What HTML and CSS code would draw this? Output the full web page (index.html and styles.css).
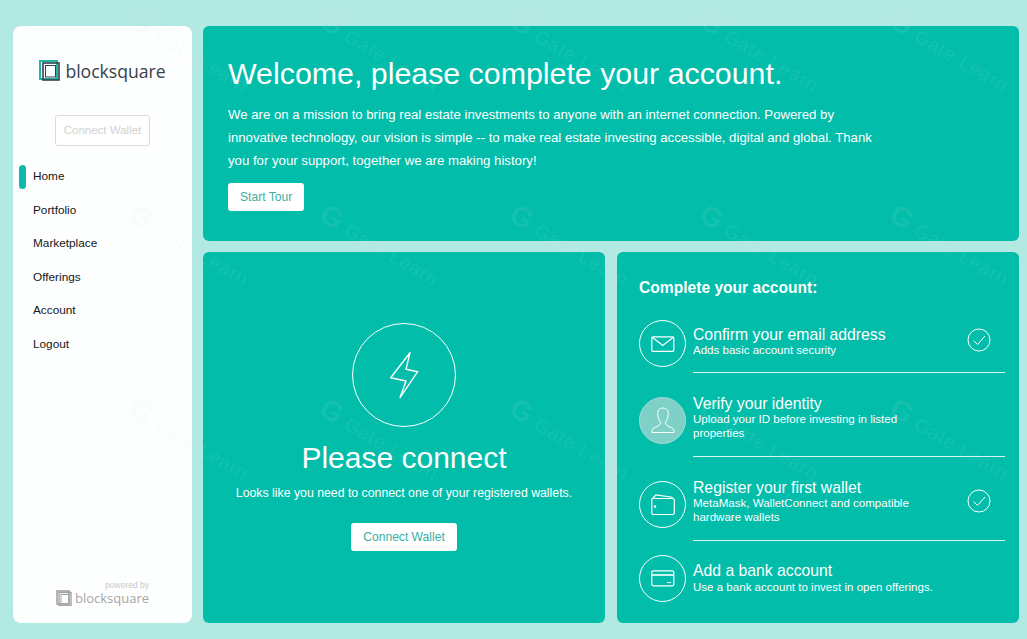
FILE: index.html
```html
<!DOCTYPE html>
<html lang="en">
<head>
    <meta charset="UTF-8">
    <title>Blocksquare Dashboard</title>
    <link rel="stylesheet" href="styles.css">
</head>
<body>
    <div class="app">
        <aside class="sidebar">
            <div class="logo">
                <svg class="logo-mark" width="22" height="22" viewBox="0 0 22 22" fill="none">
                    <rect x="1" y="1" width="17" height="18" stroke="#1fb5a6" stroke-width="2"/>
                    <rect x="4" y="3" width="16" height="17" stroke="#33404a" stroke-width="1.6"/>
                    <rect x="6.5" y="5.5" width="10" height="11.5" stroke="#33404a" stroke-width="1"/>
                </svg>
                <span>blocksquare</span>
            </div>
            <button class="btn-ghost">Connect Wallet</button>
            <nav class="nav">
                <a class="nav-item active">Home</a>
                <a class="nav-item">Portfolio</a>
                <a class="nav-item">Marketplace</a>
                <a class="nav-item">Offerings</a>
                <a class="nav-item">Account</a>
                <a class="nav-item">Logout</a>
            </nav>
            <div class="powered">
                <small>powered by</small>
                <div class="powered-row">
                    <svg width="16" height="16" viewBox="0 0 16 16" fill="none" stroke="#a3a3a3">
                        <rect x="1" y="1" width="12" height="13" stroke-width="1.6"/>
                        <rect x="3" y="2.5" width="12" height="13" stroke-width="1.4"/>
                        <rect x="5" y="4.5" width="8" height="9" stroke-width="1"/>
                    </svg>
                    <span>blocksquare</span>
                </div>
            </div>
        </aside>

        <main class="main">
            <section class="card hero">
                <h1>Welcome, please complete your account.</h1>
                <p>We are on a mission to bring real estate investments to anyone with an internet connection. Powered by innovative technology, our vision is simple -- to make real estate investing accessible, digital and global. Thank you for your support, together we are making history!</p>
                <button class="btn">Start Tour</button>
            </section>

            <div class="bottom">
                <section class="card connect">
                    <div class="connect-circle">
                        <svg width="30" height="48" viewBox="0 0 30 48" fill="none" stroke="#fff" stroke-width="1.4" stroke-linejoin="round">
                            <path d="M21 1.700 L1.700 26.700 L17 30 L11 46.700 L28.700 20.700 L17 18.300 Z"/>
                        </svg>
                    </div>
                    <h2>Please connect</h2>
                    <p>Looks like you need to connect one of your registered wallets.</p>
                    <button class="btn">Connect Wallet</button>
                </section>

                <section class="card steps">
                    <h3>Complete your account:</h3>

                    <div class="step step-one">
                        <div class="step-icon">
                            <svg width="24" height="16" viewBox="0 0 24 16" fill="none" stroke="#fff" stroke-width="1.200">
                                <rect x="0.800" y="0.800" width="22" height="14.500" rx="1"/>
                                <path d="M1.500 1.500 L11.800 9.500 L22 1.500"/>
                            </svg>
                        </div>
                        <div class="step-text">
                            <h4>Confirm your email address</h4>
                            <p>Adds basic account security</p>
                        </div>
                        <svg class="step-check" width="24" height="24" viewBox="0 0 24 24" fill="none" stroke="#fff" stroke-width="1">
                            <circle cx="12" cy="12" r="11"/>
                            <path d="M6.500 12.500 L10.500 16.500 L18 8"/>
                        </svg>
                    </div>
                    <hr class="step-line">

                    <div class="step step-two">
                        <div class="step-icon filled">
                            <svg width="24" height="28" viewBox="0 0 24 28" fill="none" stroke="#fff" stroke-width="1">
                                <path d="M12 1 C7.500 1 6.500 4.500 6.800 8 C7 11 8 13 9.300 14.500 C9.800 16.500 9 18 7 19 C4 20.500 1.500 21 1 23.500 L1 25.500 L23 25.500 L23 23.500 C22.500 21 20 20.500 17 19 C15 18 14.200 16.500 14.700 14.500 C16 13 17 11 17.200 8 C17.500 4.500 16.500 1 12 1 Z"/>
                            </svg>
                        </div>
                        <div class="step-text">
                            <h4>Verify your identity</h4>
                            <p>Upload your ID before investing in listed<br>properties</p>
                        </div>
                    </div>
                    <hr class="step-line">

                    <div class="step step-three">
                        <div class="step-icon">
                            <svg width="24" height="22" viewBox="0 0 24 22" fill="none" stroke="#fff" stroke-width="1.200">
                                <rect x="0.800" y="4.500" width="22.500" height="16" rx="1.500"/>
                                <path d="M1 5 L5 1 L21 3.200 L21 4.500"/>
                                <circle cx="4" cy="12.500" r="0.700" fill="#fff"/>
                            </svg>
                        </div>
                        <div class="step-text">
                            <h4>Register your first wallet</h4>
                            <p>MetaMask, WalletConnect and compatible<br>hardware wallets</p>
                        </div>
                        <svg class="step-check" width="24" height="24" viewBox="0 0 24 24" fill="none" stroke="#fff" stroke-width="1">
                            <circle cx="12" cy="12" r="11"/>
                            <path d="M6.500 12.500 L10.500 16.500 L18 8"/>
                        </svg>
                    </div>
                    <hr class="step-line">

                    <div class="step step-four">
                        <div class="step-icon">
                            <svg width="24" height="17" viewBox="0 0 24 17" fill="none" stroke="#fff" stroke-width="1.200">
                                <rect x="0.800" y="0.800" width="22" height="15" rx="1.500"/>
                                <path d="M1 5 H22.500" stroke-width="1.600"/>
                                <path d="M16 12.500 H20"/>
                            </svg>
                        </div>
                        <div class="step-text">
                            <h4>Add a bank account</h4>
                            <p>Use a bank account to invest in open offerings.</p>
                        </div>
                    </div>
                </section>
            </div>
        </main>
    </div>

    <!-- faint repeated watermark over the screenshot -->
    <div class="watermark" aria-hidden="true">
        <span><b>G</b> Gate Learn</span><span><b>G</b> Gate Learn</span><span><b>G</b> Gate Learn</span><span><b>G</b> Gate Learn</span><span><b>G</b> Gate Learn</span>
        <span><b>G</b> Gate Learn</span><span><b>G</b> Gate Learn</span><span><b>G</b> Gate Learn</span><span><b>G</b> Gate Learn</span><span><b>G</b> Gate Learn</span>
        <span><b>G</b> Gate Learn</span><span><b>G</b> Gate Learn</span><span><b>G</b> Gate Learn</span><span><b>G</b> Gate Learn</span><span><b>G</b> Gate Learn</span>
    </div>
</body>
</html>
```

FILE: styles.css
```css
* {
    margin: 0;
    padding: 0;
    box-sizing: border-box;
}

body {
    font-family: "Liberation Sans", Arial, sans-serif;
    background: #b2e9e2;
    width: 1027px;
    height: 639px;
    overflow: hidden;
    position: relative;
}

.app {
    display: flex;
    gap: 11px;
    padding: 26px 8px 16px 13px;
    height: 639px;
}

.sidebar {
    width: 179px;
    background: #fdfefe;
    border-radius: 8px;
    display: flex;
    flex-direction: column;
    align-items: center;
}

.logo {
    display: flex;
    align-items: center;
    gap: 4px;
    margin-top: 33px;
    color: #37424a;
    font-family: "Open Sans", sans-serif;
    font-size: 17.600px;
    line-height: 24px;
}

.btn-ghost {
    margin-top: 32px;
    width: 95px;
    height: 31px;
    padding-bottom: 2px;
    background: #fff;
    border: 1px solid #dcdcdc;
    border-radius: 3px;
    color: #d2d2d2;
    font-family: inherit;
    font-size: 11.500px;
}

.nav {
    align-self: stretch;
    margin-top: 14px;
    display: flex;
    flex-direction: column;
}

.nav-item {
    height: 33.600px;
    line-height: 33.600px;
    padding-left: 20px;
    font-size: 11.800px;
    color: #161616;
    position: relative;
}

.nav-item.active::before {
    content: "";
    position: absolute;
    left: 6px;
    top: 5px;
    width: 7px;
    height: 24px;
    border-radius: 4px;
    background: #12b9a9;
}

.powered {
    margin-top: auto;
    margin-bottom: 17px;
    color: #a6a6a6;
}

.powered small {
    display: block;
    text-align: right;
    font-size: 8.500px;
    line-height: 9px;
    color: #c9c9c9;
}

.powered-row {
    display: flex;
    align-items: center;
    gap: 3px;
    font-family: "Open Sans", sans-serif;
    font-size: 13px;
    line-height: 16px;
}

.main {
    flex: 1;
    display: flex;
    flex-direction: column;
    gap: 11px;
}

.card {
    background: #01bdaa;
    border-radius: 6px;
    color: #fff;
}

.hero {
    height: 215px;
    padding: 30px 25px 0;
}

.hero h1 {
    font-size: 30.350px;
    font-weight: 400;
    line-height: 36px;
}

.hero p {
    margin-top: 11px;
    width: 650px;
    font-size: 13.200px;
    line-height: 23px;
}

.btn {
    height: 28px;
    padding: 0 12px;
    background: #fff;
    border: none;
    border-radius: 3px;
    color: #3aafa2;
    font-family: inherit;
    font-size: 12.100px;
}

.hero .btn {
    margin-top: 11px;
}

.bottom {
    flex: 1;
    display: grid;
    grid-template-columns: 1fr 1fr;
    gap: 12px;
}

.connect {
    display: flex;
    flex-direction: column;
    align-items: center;
    padding-top: 71px;
}

.connect-circle {
    width: 104px;
    height: 104px;
    border: 1px solid #fff;
    border-radius: 50%;
    display: flex;
    align-items: center;
    justify-content: center;
}

.connect h2 {
    margin-top: 11px;
    font-size: 30px;
    font-weight: 400;
    line-height: 40px;
}

.connect p {
    margin-top: 7px;
    font-size: 12.300px;
    line-height: 16px;
}

.connect .btn {
    margin-top: 22px;
}

.steps {
    padding: 26px 14px 0 22px;
}

.steps h3 {
    font-size: 15.600px;
    font-weight: 700;
    line-height: 19px;
}

.step {
    display: flex;
    align-items: flex-start;
    gap: 7px;
    position: relative;
}

.step-one {
    margin-top: 23px;
}

.step-two {
    margin-top: 24px;
}

.step-three {
    margin-top: 24px;
}

.step-four {
    margin-top: 14px;
}

.step-icon {
    width: 47px;
    height: 47px;
    flex: none;
    border: 1px solid #fff;
    border-radius: 50%;
    display: flex;
    align-items: center;
    justify-content: center;
}

.step-icon.filled {
    background: #7fd0c6;
    border-color: #a5dcd5;
}

.step-text {
    flex: 1;
    margin-top: -2px;
}

.step-one .step-text {
    margin-top: 6px;
}

.step-four .step-text {
    margin-top: 7px;
}

.step-text h4 {
    font-size: 15.750px;
    font-weight: 400;
    line-height: 18px;
}

.step-text p {
    font-size: 11.550px;
    line-height: 13.500px;
}

.step-four .step-text p {
    margin-top: 1px;
}

.step-line {
    border: none;
    border-top: 1px solid #d8f5f1;
    margin: 5px 0 0 54px;
}

.step-two + .step-line,
.step-three + .step-line {
    margin-top: 12px;
}

.step-check {
    position: absolute;
    right: 14px;
    top: 8px;
}

.watermark {
    position: absolute;
    left: 140px;
    top: 0;
    display: grid;
    grid-template-columns: repeat(4, 190px) 120px;
    grid-auto-rows: 194px;
    padding-top: 4px;
    pointer-events: none;
}

.watermark span {
    display: block;
    white-space: nowrap;
    font-size: 19px;
    letter-spacing: 1px;
    color: rgba(205, 235, 230, 0.11);
    transform: rotate(30deg);
    transform-origin: left top;
}

.watermark b {
    font-size: 28px;
}
```
